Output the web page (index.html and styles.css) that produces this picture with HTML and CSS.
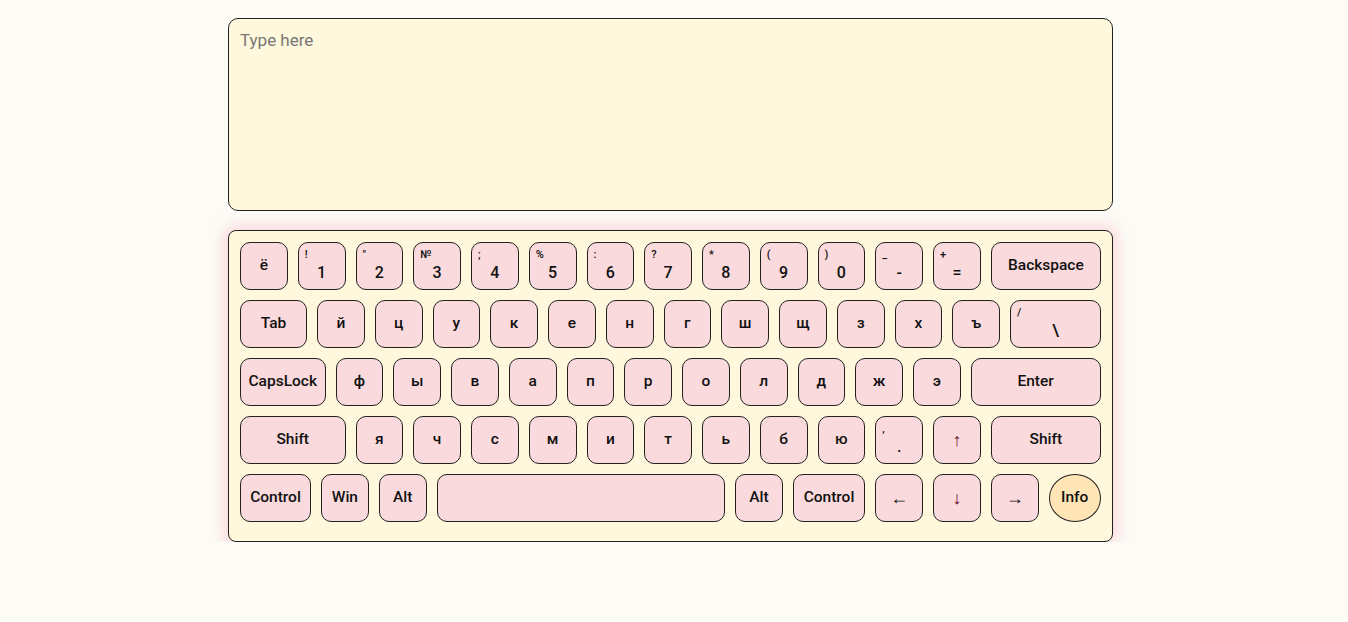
FILE: index.html
```html
<!DOCTYPE html>
<html lang="ru">
<head>
<meta charset="utf-8">
<title>Keyboard</title>
<link rel="stylesheet" href="styles.css">
</head>
<body>
<main class="app">
  <textarea class="input" placeholder="Type here"></textarea>
  <section class="keyboard">
    <div class="row">
      <div class="key">ё</div>
      <div class="key dual"><span class="sub">!</span><span class="main">1</span></div>
      <div class="key dual"><span class="sub">"</span><span class="main">2</span></div>
      <div class="key dual"><span class="sub">№</span><span class="main">3</span></div>
      <div class="key dual"><span class="sub">;</span><span class="main">4</span></div>
      <div class="key dual"><span class="sub">%</span><span class="main">5</span></div>
      <div class="key dual"><span class="sub">:</span><span class="main">6</span></div>
      <div class="key dual"><span class="sub">?</span><span class="main">7</span></div>
      <div class="key dual"><span class="sub">*</span><span class="main">8</span></div>
      <div class="key dual"><span class="sub">(</span><span class="main">9</span></div>
      <div class="key dual"><span class="sub">)</span><span class="main">0</span></div>
      <div class="key dual"><span class="sub">_</span><span class="main">-</span></div>
      <div class="key dual"><span class="sub">+</span><span class="main">=</span></div>
      <div class="key w-back">Backspace</div>
    </div>
    <div class="row">
      <div class="key w-tab">Tab</div>
      <div class="key">й</div><div class="key">ц</div><div class="key">у</div><div class="key">к</div>
      <div class="key">е</div><div class="key">н</div><div class="key">г</div><div class="key">ш</div>
      <div class="key">щ</div><div class="key">з</div><div class="key">х</div><div class="key">ъ</div>
      <div class="key dual w-slash"><span class="sub">/</span><span class="main">\</span></div>
    </div>
    <div class="row">
      <div class="key w-caps">CapsLock</div>
      <div class="key">ф</div><div class="key">ы</div><div class="key">в</div><div class="key">а</div>
      <div class="key">п</div><div class="key">р</div><div class="key">о</div><div class="key">л</div>
      <div class="key">д</div><div class="key">ж</div><div class="key">э</div>
      <div class="key w-enter">Enter</div>
    </div>
    <div class="row">
      <div class="key w-lshift">Shift</div>
      <div class="key">я</div><div class="key">ч</div><div class="key">с</div><div class="key">м</div>
      <div class="key">и</div><div class="key">т</div><div class="key">ь</div><div class="key">б</div>
      <div class="key">ю</div>
      <div class="key dual"><span class="sub">,</span><span class="main">.</span></div>
      <div class="key arrow vert">↑</div>
      <div class="key w-rshift">Shift</div>
    </div>
    <div class="row">
      <div class="key w-lctrl">Control</div>
      <div class="key">Win</div>
      <div class="key">Alt</div>
      <div class="key w-space"></div>
      <div class="key">Alt</div>
      <div class="key w-rctrl">Control</div>
      <div class="key arrow">←</div>
      <div class="key arrow vert">↓</div>
      <div class="key arrow">→</div>
      <div class="key info">Info</div>
    </div>
  </section>
</main>
</body>
</html>
```

FILE: styles.css
```css
html, body {
  margin: 0;
  padding: 0;
}
body {
  background: #fcfbf6;
  font-family: Roboto, "Liberation Sans", sans-serif;
  color: #111;
}
.app {
  width: 885px;
  margin: 18px 0 0 228px;
  display: flex;
  flex-direction: column;
  gap: 19px;
}
.input {
  box-sizing: border-box;
  display: block;
  width: 885px;
  height: 193px;
  margin: 0;
  padding: 10px 11px;
  background: #fff8dc;
  border: 1px solid #222;
  border-radius: 10px;
  font-family: Roboto, "Liberation Sans", sans-serif;
  font-size: 17px;
  line-height: 22px;
  resize: none;
  outline: none;
}
.input::placeholder {
  color: #777;
}
.keyboard {
  box-sizing: border-box;
  width: 885px;
  height: 312px;
  padding: 11px 11px 21px 11px;
  background: #fff8dc;
  border: 1px solid #222;
  border-radius: 8px;
  box-shadow: 0 0 14px 4px rgba(248, 190, 200, 0.6);
  display: flex;
  flex-direction: column;
  gap: 10px;
}
.row {
  display: flex;
  gap: 10px;
  height: 48px;
}
.key {
  box-sizing: border-box;
  flex: none;
  width: 47.75px;
  height: 48px;
  padding-bottom: 2px;
  background: #fadadd;
  border: 1px solid #222;
  border-radius: 10px;
  display: flex;
  align-items: center;
  justify-content: center;
  font-size: 15.5px;
  font-weight: 500;
  color: #111;
}
.key.dual {
  flex-direction: column;
  align-items: stretch;
  justify-content: flex-start;
  padding: 5px 6px 0 6px;
}
.sub {
  font-size: 11px;
  line-height: 13px;
  height: 13px;
  text-align: left;
}
.main {
  font-size: 16px;
  line-height: 20px;
  margin-top: 2px;
  text-align: center;
}
.arrow {
  font-family: "Liberation Sans", sans-serif;
  font-weight: 400;
  font-size: 18px;
  padding-bottom: 0;
}
.arrow.vert {
  color: #6b1030;
}
.w-back { width: 110.25px; }
.w-tab { width: 67px; }
.w-slash { width: 91px; }
.w-caps { width: 85.5px; }
.w-enter { width: 129.75px; }
.w-lshift { width: 105.5px; }
.w-rshift { width: 110.25px; }
.w-lctrl { width: 71px; }
.w-space { width: 288.5px; }
.w-rctrl { width: 72.5px; }
.info {
  width: 52.5px;
  border-radius: 50%;
  background: #ffe4b5;
}
```
